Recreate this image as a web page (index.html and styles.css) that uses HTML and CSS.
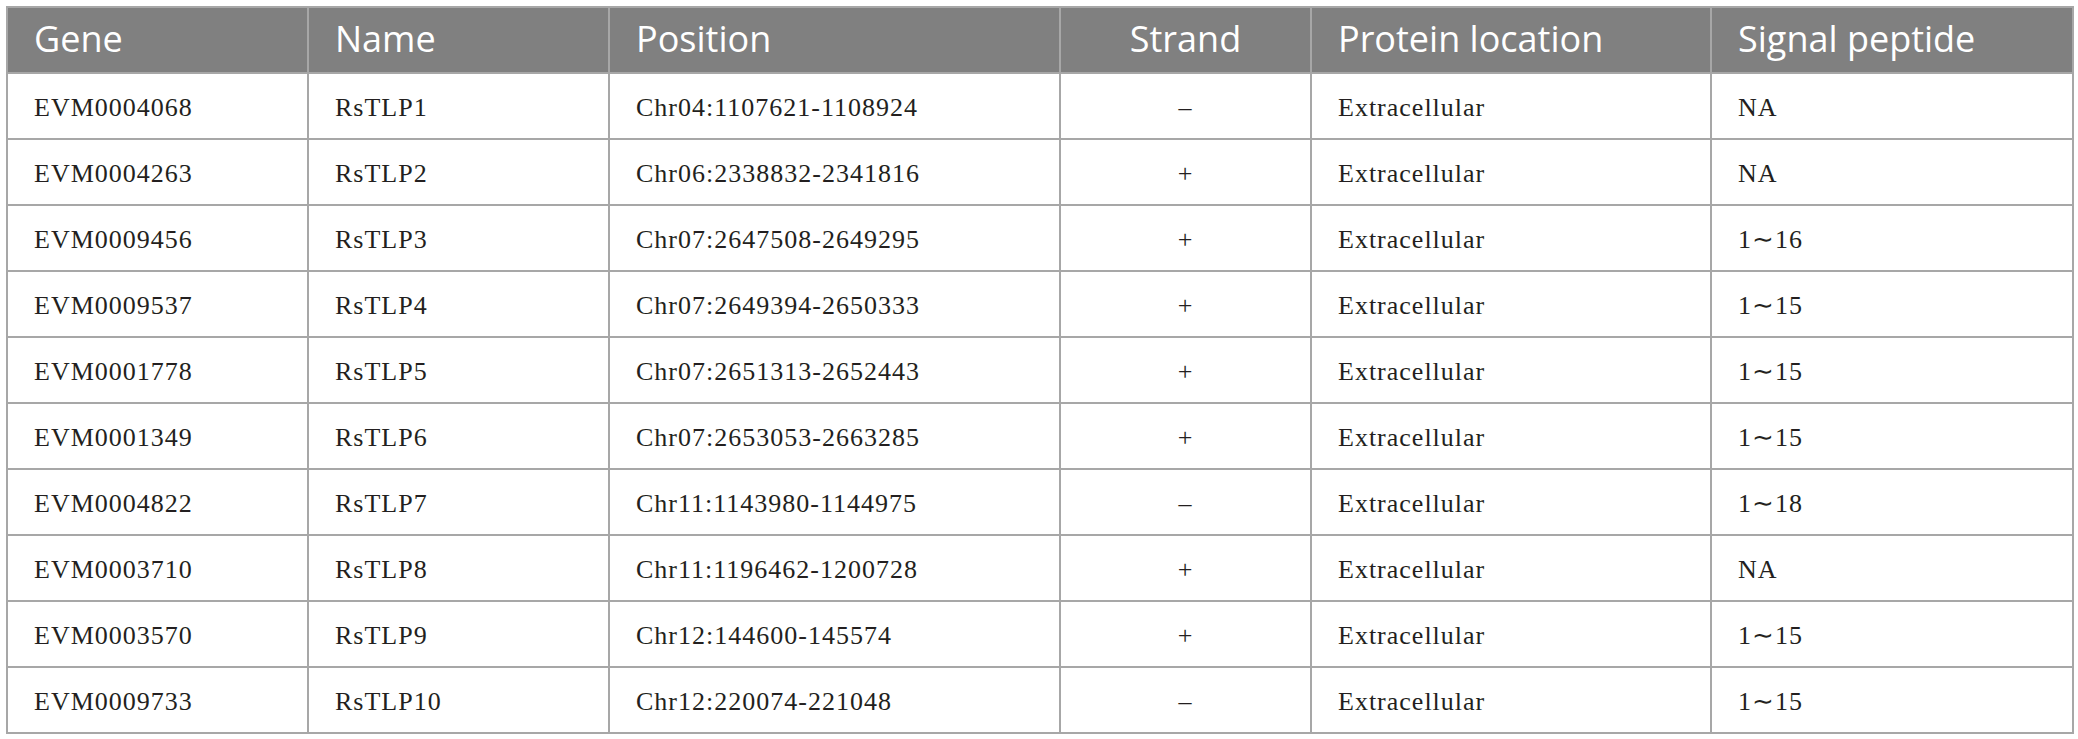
FILE: index.html
```html
<!DOCTYPE html>
<html>
<head>
<meta charset="utf-8">
<link rel="stylesheet" href="styles.css">
</head>
<body>
<table class="gene-table">
  <colgroup>
    <col class="c-gene">
    <col class="c-name">
    <col class="c-pos">
    <col class="c-strand">
    <col class="c-loc">
    <col class="c-sig">
  </colgroup>
  <thead>
    <tr>
      <th>Gene</th>
      <th>Name</th>
      <th>Position</th>
      <th class="center">Strand</th>
      <th>Protein location</th>
      <th>Signal peptide</th>
    </tr>
  </thead>
  <tbody>
    <tr><td>EVM0004068</td><td>RsTLP1</td><td>Chr04:1107621-1108924</td><td class="center">–</td><td>Extracellular</td><td>NA</td></tr>
    <tr><td>EVM0004263</td><td>RsTLP2</td><td>Chr06:2338832-2341816</td><td class="center">+</td><td>Extracellular</td><td>NA</td></tr>
    <tr><td>EVM0009456</td><td>RsTLP3</td><td>Chr07:2647508-2649295</td><td class="center">+</td><td>Extracellular</td><td>1∼16</td></tr>
    <tr><td>EVM0009537</td><td>RsTLP4</td><td>Chr07:2649394-2650333</td><td class="center">+</td><td>Extracellular</td><td>1∼15</td></tr>
    <tr><td>EVM0001778</td><td>RsTLP5</td><td>Chr07:2651313-2652443</td><td class="center">+</td><td>Extracellular</td><td>1∼15</td></tr>
    <tr><td>EVM0001349</td><td>RsTLP6</td><td>Chr07:2653053-2663285</td><td class="center">+</td><td>Extracellular</td><td>1∼15</td></tr>
    <tr><td>EVM0004822</td><td>RsTLP7</td><td>Chr11:1143980-1144975</td><td class="center">–</td><td>Extracellular</td><td>1∼18</td></tr>
    <tr><td>EVM0003710</td><td>RsTLP8</td><td>Chr11:1196462-1200728</td><td class="center">+</td><td>Extracellular</td><td>NA</td></tr>
    <tr><td>EVM0003570</td><td>RsTLP9</td><td>Chr12:144600-145574</td><td class="center">+</td><td>Extracellular</td><td>1∼15</td></tr>
    <tr><td>EVM0009733</td><td>RsTLP10</td><td>Chr12:220074-221048</td><td class="center">–</td><td>Extracellular</td><td>1∼15</td></tr>
  </tbody>
</table>
</body>
</html>
```

FILE: styles.css
```css
html, body {
  margin: 0;
  padding: 0;
  background: #ffffff;
}

.gene-table {
  margin: 6px 0 0 6px;
  width: 2066px;
  border-collapse: collapse;
  table-layout: fixed;
}

.c-gene { width: 301px; }
.c-name { width: 301px; }
.c-pos { width: 451px; }
.c-strand { width: 251px; }
.c-loc { width: 400px; }
.c-sig { width: 362px; }

.gene-table th,
.gene-table td {
  border: 2px solid #a7a7a7;
  height: 66px;
  padding: 0 0 0 26px;
  text-align: left;
  vertical-align: middle;
  box-sizing: border-box;
  white-space: nowrap;
}

.gene-table th {
  background: #808080;
  color: #ffffff;
  font-family: "Open Sans", "Noto Sans", sans-serif;
  font-weight: 400;
  font-size: 36px;
  line-height: 1;
  padding-bottom: 2px;
}

.gene-table td {
  color: #231f20;
  font-family: "Liberation Serif", "Times New Roman", serif;
  font-size: 26px;
  letter-spacing: 1px;
  line-height: 1;
  padding-top: 4px;
}

.gene-table th.center,
.gene-table td.center {
  text-align: center;
  padding-left: 0;
}
```
